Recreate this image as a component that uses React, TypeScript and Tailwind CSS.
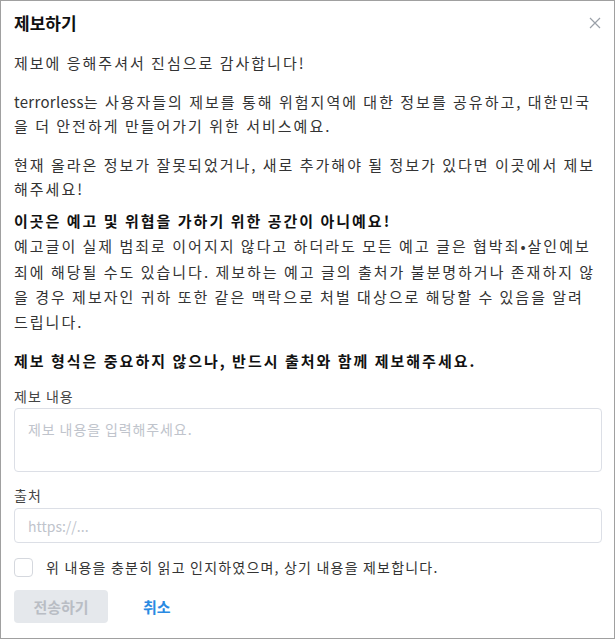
import { useState } from "react";

const font = { fontFamily: '"Malgun Gothic", "Noto Sans CJK KR", "Noto Sans", sans-serif' };

export default function App() {
  const [content, setContent] = useState("");
  const [source, setSource] = useState("");
  const [agreed, setAgreed] = useState(false);

  return (
    <div style={font} className="h-[639px] w-[615px] overflow-hidden border border-[#a0a0a0] bg-white text-[15px] text-[#333]">
      <div className="flex items-center justify-between px-[13px] pt-[10px]">
        <h2 className="text-[17px] font-bold leading-6 text-[#111]">제보하기</h2>
        <button type="button" className="text-[#9aa0a8]" aria-label="닫기">
          <svg width="12" height="12" viewBox="0 0 12 12" stroke="currentColor" strokeWidth="1.2">
            <path d="M1 1l10 10M11 1L1 11" />
          </svg>
        </button>
      </div>

      <div className="px-[13px] pt-[16px] leading-6 tracking-[2px]">
        <p>제보에 응해주셔서 진심으로 감사합니다!</p>
        <p className="mt-[15px]">
          <span className="tracking-[0.3px]">terrorless</span>는 사용자들의 제보를 통해 위험지역에 대한 정보를 공유하고,
          대한민국을 더 안전하게 만들어가기 위한 서비스예요.
        </p>
        <p className="mt-[15px]">현재 올라온 정보가 잘못되었거나, 새로 추가해야 될 정보가 있다면 이곳에서 제보해주세요!</p>
        <p className="mt-[7px] leading-[25.3px]">
          <b className="text-[#111]">이곳은 예고 및 위협을 가하기 위한 공간이 아니예요!</b>
          <br />
          예고글이 실제 범죄로 이어지지 않다고 하더라도 모든 예고 글은 협박죄•살인예보죄에 해당될 수도
          있습니다. 제보하는 예고 글의 출처가 불분명하거나 존재하지 않을 경우 제보자인 귀하 또한 같은
          맥락으로 처벌 대상으로 해당할 수 있음을 알려
          <br />
          드립니다.
        </p>
        <p className="mt-[15px] font-bold text-[#111]">제보 형식은 중요하지 않으나, 반드시 출처와 함께 제보해주세요.</p>
      </div>

      <form className="px-[12px] pt-[13px]" onSubmit={(e) => e.preventDefault()}>
        <label className="block pl-[1px] text-[14px] leading-5 tracking-[1px] text-[#444]">
          제보 내용
          <textarea
            value={content}
            onChange={(e) => setContent(e.target.value)}
            placeholder="제보 내용을 입력해주세요."
            className="mt-[2px] block h-[64px] w-full resize-none rounded border border-[#dcdfe6] px-[13px] py-[10px] text-[14px] tracking-[0.9px] outline-none placeholder:text-[#c0c4cc]"
          />
        </label>

        <label className="mt-[13px] block pl-[1px] text-[14px] leading-5 tracking-[1px] text-[#444]">
          출처
          <input
            value={source}
            onChange={(e) => setSource(e.target.value)}
            placeholder="https://..."
            className="mt-[3px] block h-[35px] w-full rounded border border-[#dcdfe6] px-[13px] text-[14px] tracking-normal outline-none placeholder:text-[#c0c4cc]"
          />
        </label>

        <label className="mt-[14px] flex items-center gap-[13px] pl-[1px] text-[14px] tracking-[1.2px] text-[#333]">
          <input
            type="checkbox"
            checked={agreed}
            onChange={(e) => setAgreed(e.target.checked)}
            className="h-[19px] w-[19px] appearance-none rounded border border-[#d5d8de] bg-white"
          />
          위 내용을 충분히 읽고 인지하였으며, 상기 내용을 제보합니다.
        </label>

        <div className="mt-[12px] flex items-center gap-[35px] pl-[1px]">
          <button
            type="submit"
            disabled={!agreed}
            className="h-[33px] w-[94px] rounded bg-[#e5e8ec] text-[15px] font-bold text-[#b9bdc4]"
          >
            전송하기
          </button>
          <button type="button" className="text-[15px] font-bold text-[#2a8ae2]">
            취소
          </button>
        </div>
      </form>
    </div>
  );
}
